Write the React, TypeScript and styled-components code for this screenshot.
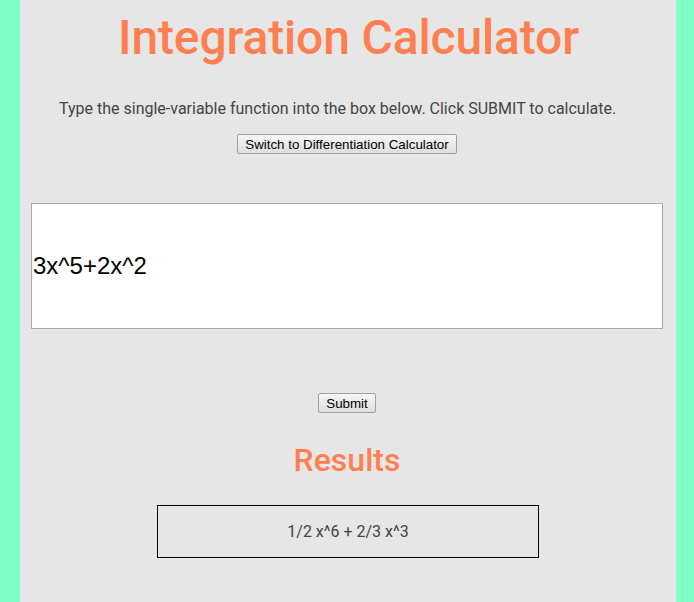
import styled, { createGlobalStyle } from 'styled-components';

const GlobalStyle = createGlobalStyle`
  html, body {
    margin: 0;
    padding: 0;
    background: #7fffc8;
  }
`;

const S = {
  Panel: styled.main`
    box-sizing: border-box;
    width: 656px;
    min-height: 100vh;
    margin-left: 20px;
    padding: 10px 0 40px;
    background: #e6e6e6;
    display: flex;
    flex-direction: column;
    align-items: center;
    font-family: Roboto, 'Liberation Sans', sans-serif;
  `,

  Title: styled.h1`
    margin: 0 0 0 1px;
    font-size: 48px;
    font-weight: 500;
    line-height: 56px;
    letter-spacing: -0.15px;
    color: #ff7f50;
  `,

  Intro: styled.p`
    align-self: flex-start;
    margin: 33px 0 0 39px;
    font-size: 16px;
    line-height: 19px;
    color: #444;
  `,

  NativeButton: styled.button<{ $top: number }>`
    margin: ${({ $top }) => $top}px 2px 0 0;
    padding: 1px 7px;
    font-family: Arial, 'Liberation Sans', sans-serif;
    font-size: 13.33px;
    color: #000;
    background: linear-gradient(#f6f6f6, #dedede);
    border: 1px solid #a0a0a0;
    border-radius: 2px;
    height: 20px;
  `,

  FunctionInput: styled.input`
    box-sizing: border-box;
    align-self: flex-start;
    width: 632px;
    height: 126px;
    margin: 49px 0 0 11px;
    padding: 1px 1px;
    border: 1px solid #a9a9a9;
    background: #fff;
    font-family: Arial, 'Liberation Sans', sans-serif;
    font-size: 24px;
    color: #000;
    outline: none;
  `,

  ResultsTitle: styled.h2`
    margin: 28px 2px 0 0;
    font-size: 32px;
    font-weight: 500;
    line-height: 38px;
    color: #ff7f50;
  `,

  ResultBox: styled.div`
    box-sizing: border-box;
    width: 382px;
    height: 53px;
    margin-top: 26px;
    border: 1px solid #000;
    display: flex;
    align-items: center;
    justify-content: center;
    font-size: 16px;
    color: #444;
  `,
};

function App() {
  return (
    <>
      <GlobalStyle />
      <S.Panel>
        <S.Title>Integration Calculator</S.Title>
        <S.Intro>
          Type the single-variable function into the box below. Click SUBMIT to calculate.
        </S.Intro>
        <S.NativeButton $top={16}>Switch to Differentiation Calculator</S.NativeButton>
        <S.FunctionInput type="text" defaultValue="3x^5+2x^2" />
        <S.NativeButton $top={64}>Submit</S.NativeButton>
        <S.ResultsTitle>Results</S.ResultsTitle>
        <S.ResultBox>1/2 x^6 + 2/3 x^3</S.ResultBox>
      </S.Panel>
    </>
  );
}

export default App;
